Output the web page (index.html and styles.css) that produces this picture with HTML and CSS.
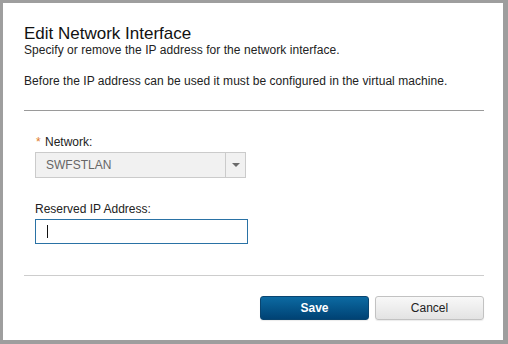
FILE: index.html
```html
<!DOCTYPE html>
<html lang="en">
<head>
    <meta charset="UTF-8">
    <meta name="viewport" content="width=device-width, initial-scale=1.0">
    <title>Edit Network Interface</title>
    <link rel="stylesheet" href="styles.css">
</head>
<body>
    <div class="dialog">
        <h1 class="title">Edit Network Interface</h1>
        <p class="intro">Specify or remove the IP address for the network interface.</p>
        <p class="note">Before the IP address can be used it must be configured in the virtual machine.</p>

        <hr class="rule">

        <div class="form">
            <div class="form-group">
                <label class="label"><span class="required">*</span> Network:</label>
                <div class="select">
                    <span class="select-value">SWFSTLAN</span>
                    <span class="select-arrow"></span>
                </div>
            </div>

            <div class="form-group">
                <label class="label">Reserved IP Address:</label>
                <div class="text-input"><span class="caret"></span></div>
            </div>
        </div>

        <hr class="rule light">

        <div class="actions">
            <button class="btn primary">Save</button>
            <button class="btn">Cancel</button>
        </div>
    </div>
</body>
</html>
```

FILE: styles.css
```css
html, body {
    margin: 0;
    padding: 0;
}
body {
    background: #9e9e9e;
    font-family: "Liberation Sans", Arial, sans-serif;
    font-size: 12px;
    color: #222;
    width: 508px;
    height: 344px;
    overflow: hidden;
}
.dialog {
    box-sizing: border-box;
    margin: 3px 5px 4px 3px;
    height: 337px;
    padding: 22px 19px 0 21px;
    background: #fff;
}
.title {
    margin: 0;
    font-size: 17px;
    font-weight: normal;
    line-height: 18px;
    color: #111;
}
.intro,
.note {
    margin: 0;
    line-height: 14px;
    letter-spacing: 0.05px;
}
.note {
    margin-top: 17px;
}
.rule {
    margin: 22px 0 0;
    border: none;
    border-top: 1px solid #9a9a9a;
}
.rule.light {
    margin-top: 31px;
    border-top-color: #cdcdcd;
}
.form {
    padding: 24px 0 0 11px;
}
.form-group + .form-group {
    margin-top: 24px;
}
.label {
    display: block;
    line-height: 14px;
    margin-bottom: 3px;
}
.required {
    color: #e07b2b;
    margin-left: 1px;
    margin-right: 1px;
}
.select {
    box-sizing: border-box;
    display: flex;
    width: 211px;
    height: 26px;
    background: #f1f1f1;
    border: 1px solid #cbcbcb;
}
.select-value {
    flex: 1;
    padding-left: 10px;
    line-height: 24px;
    color: #666;
}
.select-arrow {
    width: 19px;
    border-left: 1px solid #cbcbcb;
    position: relative;
}
.select-arrow::after {
    content: "";
    position: absolute;
    left: 6px;
    top: 10px;
    border-left: 4px solid transparent;
    border-right: 4px solid transparent;
    border-top: 4px solid #6a6a6a;
}
.text-input {
    box-sizing: border-box;
    width: 213px;
    height: 25px;
    border: 1px solid #2a72a5;
    padding: 5px 0 0 11px;
}
.caret {
    display: block;
    width: 1px;
    height: 13px;
    background: #111;
}
.actions {
    display: flex;
    justify-content: flex-end;
    gap: 6px;
    margin-top: 20px;
}
.btn {
    box-sizing: border-box;
    width: 109px;
    height: 24px;
    padding: 0;
    font-family: inherit;
    font-size: 12px;
    color: #222;
    border: 1px solid #c2c2c2;
    border-radius: 3px;
    background: linear-gradient(#f8f8f8, #e3e3e3);
    box-shadow: 0 1px 1px rgba(0,0,0,0.08);
}
.btn.primary {
    color: #fff;
    font-weight: bold;
    border-color: #0a4570;
    background: linear-gradient(#0c6aa2, #004274);
}
```
